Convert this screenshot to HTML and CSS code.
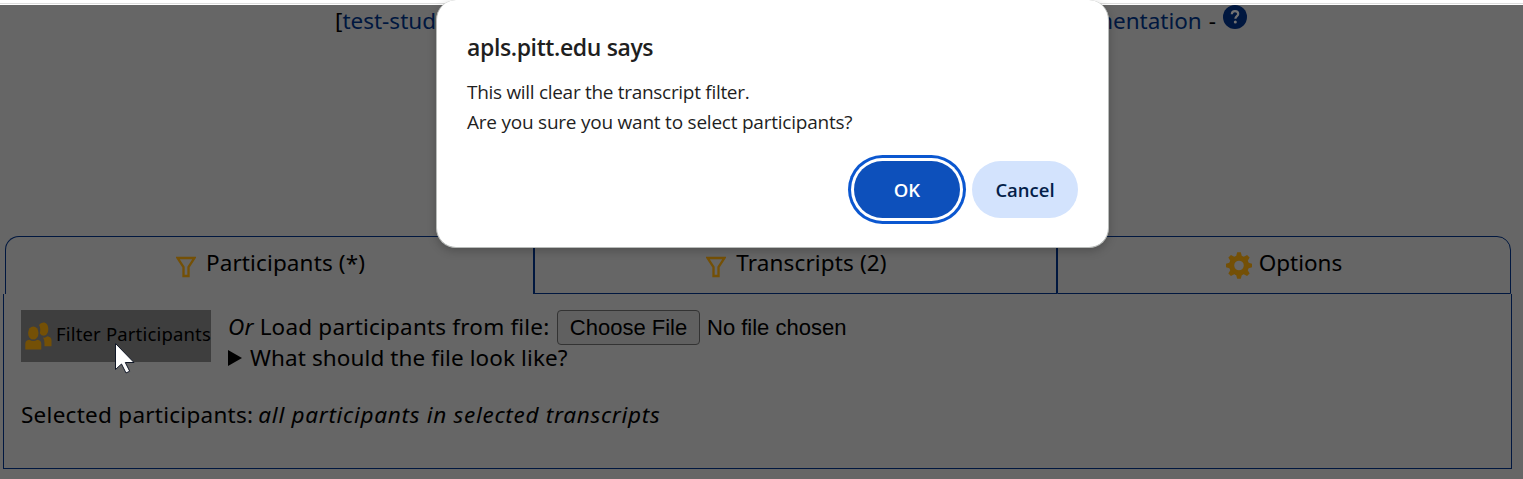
FILE: index.html
```html
<!DOCTYPE html>
<html lang="en">
<head>
<meta charset="utf-8">
<title>Participants</title>
<link rel="stylesheet" href="styles.css">
</head>
<body>
<div class="toolbar-edge"></div>
<main class="page">
  <header class="user-bar">
    <div class="user">[<a class="link">test-stud</a></div>
    <div class="help"><a class="link">documentation</a> -
      <svg class="help-icon" width="24" height="24" viewBox="0 0 24 24"><circle cx="12" cy="12" r="12" fill="#00173f"/><path d="M8.8 9.3C8.9 7.2 10 6.2 12 6.2s3.2 1 3.2 2.7c0 2.1-2.8 2.3-2.8 4.8" fill="none" stroke="#737373" stroke-width="2.2"/><circle cx="12.3" cy="17" r="1.5" fill="#737373"/></svg>
    </div>
  </header>
  <nav class="tabs">
    <div class="tab tab-first"><svg class="funnel" width="20" height="22" viewBox="0 0 20 22"><path d="M1.5 2H18.5L12.5 11V20H7.5V11Z" fill="none" stroke="#745006" stroke-width="2.3"/></svg><span class="t-participants">Participants (*)</span></div>
    <div class="tab tab-mid"><svg class="funnel" width="20" height="22" viewBox="0 0 20 22"><path d="M1.5 2H18.5L12.5 11V20H7.5V11Z" fill="none" stroke="#745006" stroke-width="2.3"/></svg><span class="t-transcripts">Transcripts (2)</span></div>
    <div class="tab tab-last"><svg class="gear" width="26" height="27" viewBox="0 0 26 27"><g fill="#745006"><path fill-rule="evenodd" d="M13 3.5a10 10 0 1 0 0 20a10 10 0 1 0 0-20ZM13 8.7a4.8 4.8 0 1 1 0 9.6a4.8 4.8 0 1 1 0-9.6Z"/><path id="tooth" d="M11.2 .3h3.6l1.3 4.7h-6.2z"/><use href="#tooth" transform="rotate(45 13 13.5)"/><use href="#tooth" transform="rotate(90 13 13.5)"/><use href="#tooth" transform="rotate(135 13 13.5)"/><use href="#tooth" transform="rotate(180 13 13.5)"/><use href="#tooth" transform="rotate(225 13 13.5)"/><use href="#tooth" transform="rotate(270 13 13.5)"/><use href="#tooth" transform="rotate(315 13 13.5)"/></g></svg><span class="t-options">Options</span></div>
  </nav>
  <section class="panel">
    <div class="filter-row">
      <div class="filter-button"><svg class="people" width="27" height="28" viewBox="0 0 27 28"><g fill="#745006"><ellipse cx="8.3" cy="11" rx="5.2" ry="6.6"/><path d="M.3 27.5V22q0-4 4-4.3q4 2.7 8 0q4 .3 4 4.300V27.500Z"/><path d="M14 3Q15.500.5 18.300.5C21.500.5 23.300 3 23.300 7s-2 6.700-4.600 6.700q-2.400 0-3.900-2.500Q16 6.500 14 3Z"/><path d="M18 15.500q2.200.6 4.300-1.200q4.200.4 4.200 4.200V24.300H19.500V21q0-3-1.500-5.500Z"/></g></svg><span>Filter Participants</span></div>
      <div class="load">
        <div class="load-line"><span class="t-load"><i>Or</i> Load participants from file:</span><span class="choose">Choose File</span><span class="no-file">No file chosen</span></div>
        <div class="details"><svg width="14" height="16" viewBox="0 0 14 16"><path d="M0 0L14 8L0 16Z"/></svg><span>What should the file look like?</span></div>
      </div>
    </div>
    <div class="selected"><span>Selected participants:</span><i>all participants in selected transcripts</i></div>
  </section>
</main>
<div class="dialog">
  <h1 class="dialog-title">apls.pitt.edu says</h1>
  <p class="dialog-text"><span class="l1">This will clear the transcript filter.</span><br><span class="l2">Are you sure you want to select participants?</span></p>
  <div class="dialog-actions"><div class="button ok">OK</div><div class="button cancel">Cancel</div></div>
</div>
<svg class="cursor" width="22" height="32" viewBox="0 0 22 32"><path d="M1.500 1.500V27.500L7.500 22L12 31L15.700 29.200L11.300 20.500H20Z" fill="#fff" stroke="#111827"/></svg>
</body>
</html>
```
FILE: styles.css
```css
* { box-sizing: border-box; }
body { margin: 0; height: 479px; overflow: hidden; background: #666; color: #000; font: 22.5px/30px "Noto Sans", sans-serif; }
svg { display: block; flex: none; }
span, i { white-space: nowrap; }
.toolbar-edge { height: 5px; background: #fff; border-bottom: 1px solid #fff; box-shadow: inset 0 -1px #dedede; }
.page { height: 474px; }
.user-bar { height: 231px; display: flex; justify-content: space-between; padding: 1px 276px 0 335px; }
.help { display: flex; gap: 7px; white-space: nowrap; height: 30px; }
.help-icon { margin-top: -1px; }
.link { color: #00173f; }
.tabs { display: flex; height: 58px; margin: 0 12px 0 5px; }
.tab { display: flex; justify-content: center; border: 1px solid #00173f; padding-top: 11px; }
.tab-first { width: 529px; border-bottom: 0; border-radius: 14px 0 0 0; }
.tab-mid { width: 523px; }
.tab-last { flex: 1; border-radius: 0 14px 0 0; }
.t-participants, .t-transcripts { letter-spacing: .13px; }
.funnel { margin: 8px 10px 0 2px; }
.gear { margin: 4px 7px 0 0; }
.panel { margin: 0 11px 0 3px; height: 175px; border: 1px solid #00173f; border-top: 0; padding: 16px 17px; }
.filter-row { display: flex; gap: 17px; height: 90px; }
.filter-button { display: flex; width: 190px; height: 52px; background: #3e3e3e; padding: 9px 0 0 4px; font-size: 18.5px; letter-spacing: .17px; }
.people { margin: 3px 4px 0 0; }
.load-line { display: flex; height: 35px; line-height: 34px; }
.t-load { width: 321px; letter-spacing: .2px; }
.choose { width: 143px; height: 35px; border: 1px solid #333; border-radius: 4px; background: #606060; margin: 0 7px 0 8px; text-align: center; line-height: 33px; }
.choose, .no-file { font-family: "Liberation Sans", sans-serif; font-size: 22px; }
.no-file { line-height: 35px; }
.details { display: flex; gap: 8px; line-height: 26px; letter-spacing: .1px; }
.details svg { margin-top: 5px; }
.selected { display: flex; gap: 5px; letter-spacing: .27px; }
.selected i { letter-spacing: .72px; }
.dialog { position: absolute; left: 436px; top: 0; width: 673px; height: 248px; background: #fff; border: 1px solid #b9bcba; border-top: 0; border-radius: 20px; padding: 32px 30px 0 30px; box-shadow: 0 3px 10px rgba(0,0,0,.22); color: #1f1f1f; font-family: "Open Sans", sans-serif; }
.dialog-title { margin: 0; font-size: 23px; line-height: 30px; font-weight: 600; letter-spacing: -.38px; }
.dialog-text { margin: 15px 0 24px; font-size: 19px; line-height: 30px; }
.l1 { letter-spacing: -.3px; }
.l2 { letter-spacing: -.23px; }
.dialog-actions { display: flex; justify-content: flex-end; gap: 12px; }
.button { width: 106px; height: 57px; border-radius: 29px; display: flex; align-items: center; justify-content: center; font-size: 18.5px; font-weight: 600; }
.ok { background: #0d50bb; color: #fff; box-shadow: 0 0 0 3px #fff, 0 0 0 6px #0b57d0; }
.cancel { background: #d3e3fd; color: #041e49; }
.cursor { position: absolute; left: 114px; top: 342px; }
```
